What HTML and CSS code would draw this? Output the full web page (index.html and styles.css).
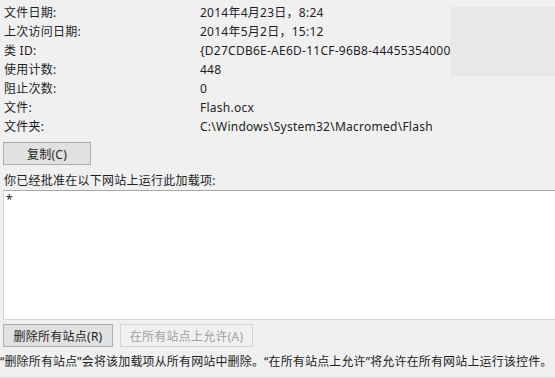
FILE: index.html
```html
<!DOCTYPE html>
<html lang="zh-CN">
<head>
  <meta charset="UTF-8" />
  <title>加载项属性</title>
  <link rel="stylesheet" href="styles.css">
</head>
<body>

<div class="panel">
  <div class="props">
    <div class="label">文件日期:</div><div class="value">2014年4月23日，8:24</div>
    <div class="label">上次访问日期:</div><div class="value">2014年5月2日，15:12</div>
    <div class="label">类 ID:</div><div class="value">{D27CDB6E-AE6D-11CF-96B8-44455354000</div>
    <div class="label">使用计数:</div><div class="value">448</div>
    <div class="label">阻止次数:</div><div class="value">0</div>
    <div class="label">文件:</div><div class="value">Flash.ocx</div>
    <div class="label">文件夹:</div><div class="value">C:\Windows\System32\Macromed\Flash</div>
  </div>
  <div class="blur-box"></div>

  <button class="btn copy">复制(C)</button>

  <div class="sites-label">你已经批准在以下网站上运行此加载项:</div>
  <div class="sites-list">*</div>

  <div class="actions">
    <button class="btn remove">删除所有站点(R)</button>
    <button class="btn allow" disabled>在所有站点上允许(A)</button>
  </div>

  <div class="note">“删除所有站点”会将该加载项从所有网站中删除。“在所有站点上允许”将允许在所有网站上运行该控件。</div>
</div>

</body>
</html>
```

FILE: styles.css
```css
* {
  box-sizing: border-box;
}

body {
  margin: 0;
  width: 555px;
  height: 378px;
  overflow: hidden;
  background: #f0f0f0;
  font-family: "Noto Sans", "Noto Sans CJK SC", sans-serif;
  font-size: 12px;
  letter-spacing: 0.25px;
  color: #1e1e1e;
}

.panel {
  position: relative;
  height: 378px;
  padding-top: 3px;
  border-bottom: 1px solid #dcdcdc;
}

.props {
  display: grid;
  grid-template-columns: 196px 1fr;
  grid-auto-rows: 19px;
  align-items: center;
  padding-left: 4px;
  line-height: 19px;
  white-space: nowrap;
}

.blur-box {
  position: absolute;
  top: 7px;
  left: 450px;
  width: 105px;
  height: 69px;
  background: #e8e8e8;
}

.btn {
  height: 23px;
  padding: 0;
  font-family: inherit;
  font-size: 12px;
  letter-spacing: inherit;
  color: #1e1e1e;
  background: #e1e1e1;
  border: 1px solid #adadad;
}

.copy {
  display: block;
  width: 88px;
  margin: 6px 0 0 3px;
}

.sites-label {
  height: 19px;
  line-height: 19px;
  margin-top: 6px;
  padding-left: 4px;
}

.sites-list {
  height: 130px;
  margin: 0 -2px 0 3px;
  padding: 2px 2px;
  background: #fff;
  border: 1px solid #d8d8d8;
  border-top-color: #a8a8a8;
  line-height: 14px;
}

.actions {
  display: flex;
  gap: 7px;
  margin: 4px 0 0 3px;
}

.remove {
  width: 110px;
}

.allow {
  width: 133px;
  color: #a0a0a0;
  background: #f0f0f0;
  border-color: #d2d2d2;
}

.note {
  height: 19px;
  line-height: 19px;
  margin-top: 5px;
  white-space: nowrap;
  letter-spacing: 0.15px;
}
```
